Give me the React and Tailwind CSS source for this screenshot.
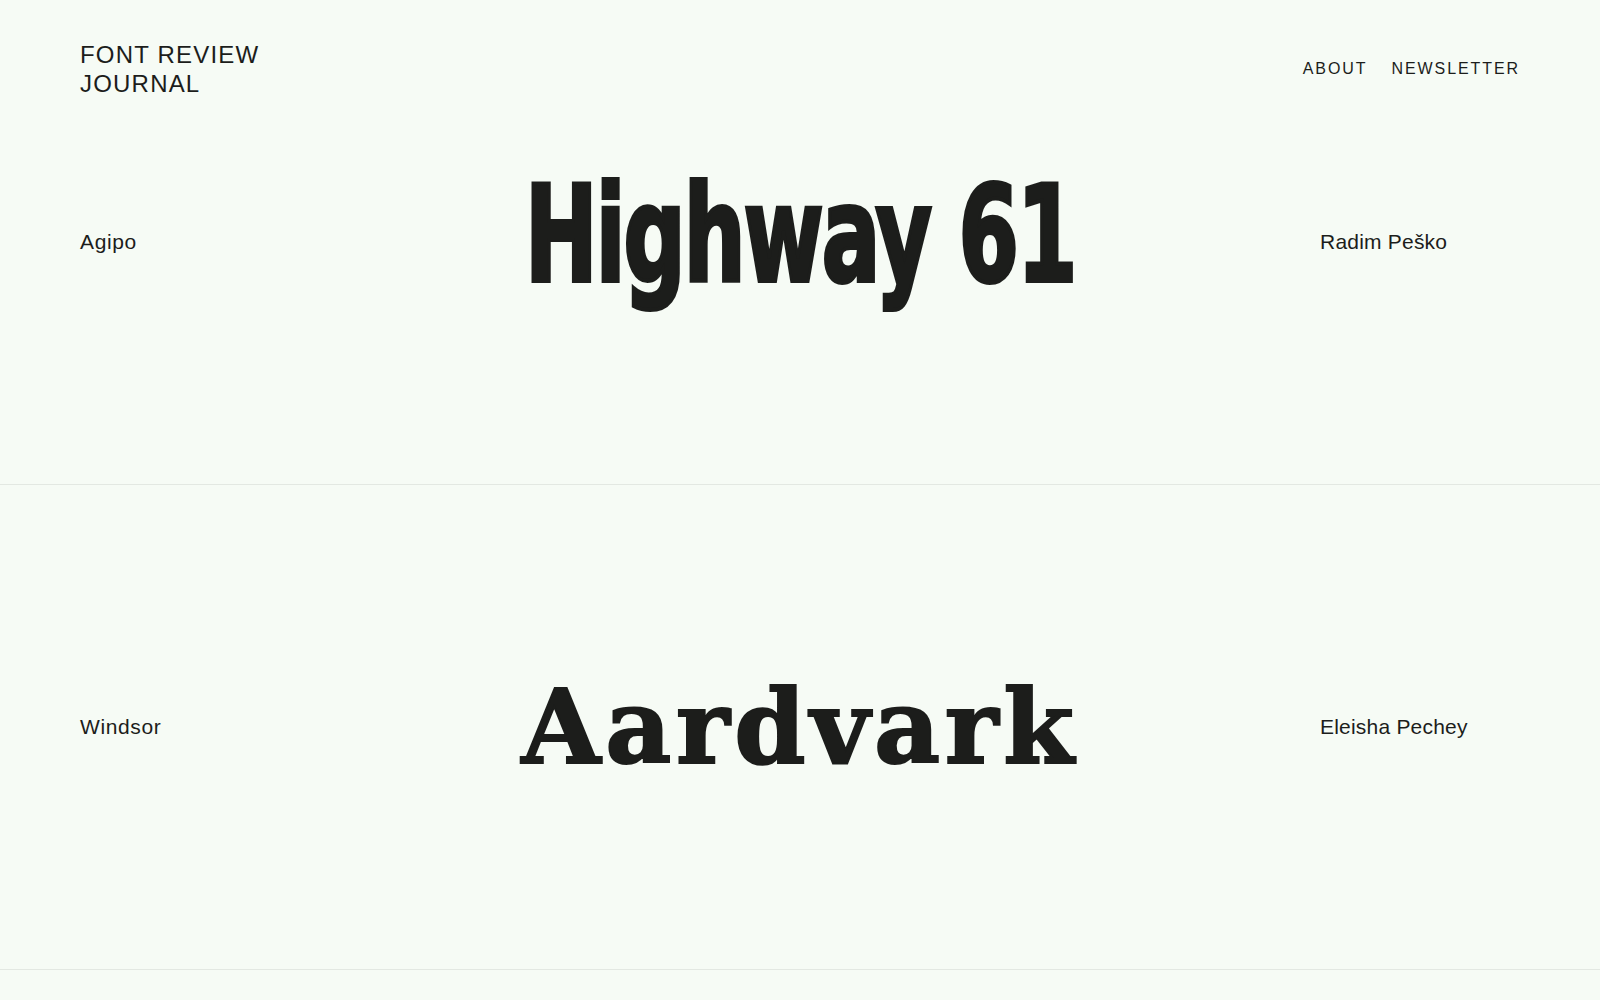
const ROWS = [
  {
    name: "Agipo",
    sample: "Highway 61",
    designer: "Radim Peško",
    sampleClass:
      "font-['DejaVu_Sans_Condensed','Liberation_Sans_Narrow','Liberation_Sans',sans-serif] font-bold text-[134px] leading-none tracking-[-0.02em] scale-x-[0.72] mb-[14px] [-webkit-text-stroke:4px_#1c1d1b]",
  },
  {
    name: "Windsor",
    sample: "Aardvark",
    designer: "Eleisha Pechey",
    sampleClass:
      "font-['DejaVu_Serif','Liberation_Serif',serif] font-bold text-[102px] leading-none tracking-[0.045em] [-webkit-text-stroke:2px_#1c1d1b]",
  },
];

function Header() {
  return (
    <header className="absolute inset-x-0 top-0 flex items-center justify-between px-[80px] pt-[40px]">
      <a className="block text-[24px] leading-[29px] tracking-[0.05em] uppercase text-[#1c1d1b]">
        Font Review
        <br />
        Journal
      </a>
      <nav className="flex items-center gap-6 text-[16px] leading-6 tracking-[0.12em] uppercase text-[#1c1d1b]">
        <a>About</a>
        <a>Newsletter</a>
      </nav>
    </header>
  );
}

function FontRow({ row }) {
  return (
    <section className="grid h-[485px] grid-cols-[1fr_880px_1fr] items-center border-b border-[#e3e8e2] px-[80px] text-[#1c1d1b]">
      <div className="text-[21px] tracking-[0.03em]">{row.name}</div>
      <div className="flex justify-center">
        <div className={`whitespace-nowrap ${row.sampleClass}`}>{row.sample}</div>
      </div>
      <div className="pl-[80px] text-[21px] tracking-[0.01em] whitespace-nowrap">{row.designer}</div>
    </section>
  );
}

export default function App() {
  return (
    <div className="relative min-h-screen bg-[#f6fbf5] font-['Liberation_Sans',sans-serif] text-[#1c1d1b]">
      <Header />
      <main>
        {ROWS.map((r) => (
          <FontRow key={r.name} row={r} />
        ))}
        <div className="h-[485px]" />
      </main>
    </div>
  );
}
